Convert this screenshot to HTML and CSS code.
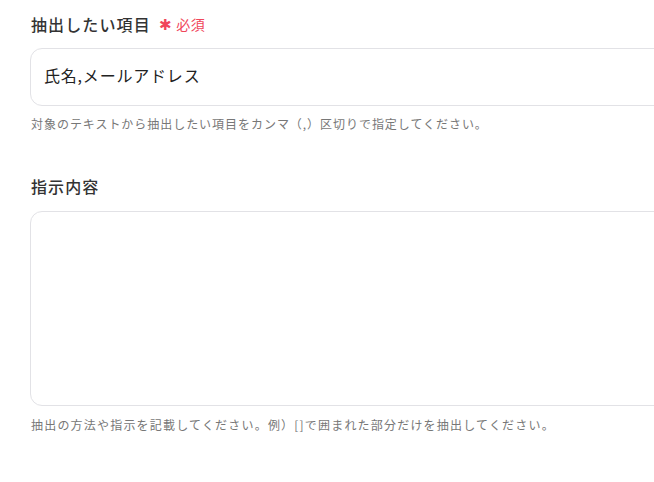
FILE: index.html
```html
<!DOCTYPE html>
<html lang="ja">
<head>
<meta charset="utf-8">
<link rel="stylesheet" href="styles.css">
</head>
<body>
<div class="form">
  <section class="field field-first">
    <div class="field-label">抽出したい項目<span class="required"><span class="star">✱</span>必須</span></div>
    <div class="input-box">氏名,メールアドレス</div>
    <p class="help">対象のテキストから抽出したい項目をカンマ（,）区切りで指定してください。</p>
  </section>
  <section class="field field-second">
    <div class="field-label">指示内容</div>
    <div class="textarea-box"></div>
    <p class="help help-2">抽出の方法や指示を記載してください。例）[]で囲まれた部分だけを抽出してください。</p>
  </section>
</div>
</body>
</html>
```

FILE: styles.css
```css
html, body {
  margin: 0;
  padding: 0;
  background: #ffffff;
  overflow: hidden;
}
body {
  font-family: "Noto Sans CJK JP", "Noto Sans", sans-serif;
  color: #333333;
  letter-spacing: 0.05em;
}
.form {
  padding-left: 30px;
  width: 700px;
}
.field-first {
  padding-top: 12px;
}
.field-second {
  margin-top: 41px;
}
.field-label {
  font-size: 16px;
  line-height: 24px;
  font-weight: 500;
  color: #333333;
  padding-left: 1px;
  display: flex;
  align-items: center;
  letter-spacing: 0.07em;
}
.required {
  font-size: 14px;
  font-weight: 400;
  color: #f0465a;
  margin-left: 8px;
  display: flex;
  align-items: center;
  letter-spacing: 0.03em;
}
.star {
  font-size: 15px;
  margin-right: 4px;
}
.input-box {
  margin-top: 12px;
  border: 1px solid #e2e2e6;
  border-radius: 12px;
  box-sizing: content-box;
  display: flex;
  align-items: center;
  padding-left: 13px;
  padding-bottom: 4px;
  height: 52px;
  font-size: 16px;
  color: #222222;
}
.textarea-box {
  margin-top: 13px;
  height: 193px;
  border: 1px solid #e2e2e6;
  border-radius: 12px;
}
.help {
  margin: 9px 0 0;
  padding-left: 1px;
  font-size: 12px;
  line-height: 18px;
  color: #777777;
  letter-spacing: 0.08em;
}
.help-2 {
  margin-top: 10px;
  letter-spacing: 0.1em;
}
```
